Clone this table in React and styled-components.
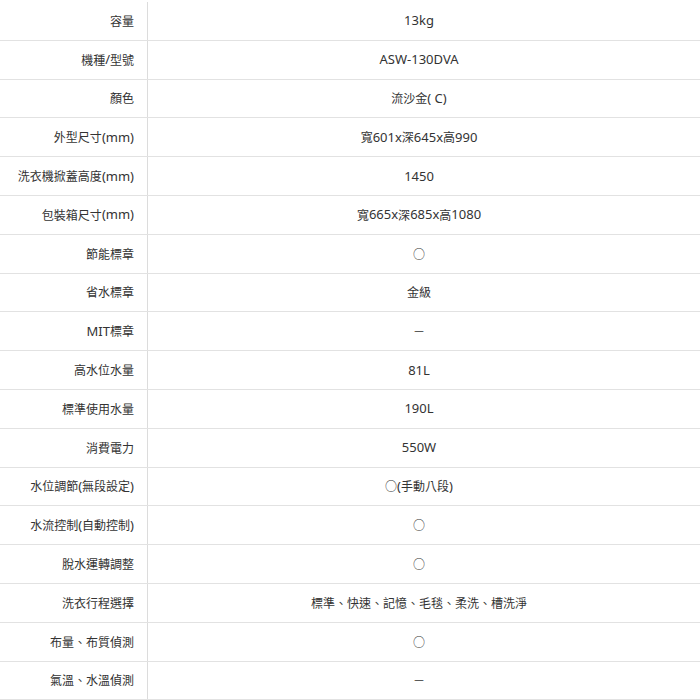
import React from "react";
import styled, { createGlobalStyle } from "styled-components";

const GlobalStyle = createGlobalStyle`
  html, body {
    margin: 0;
    padding: 0;
    background: #fff;
  }
  body {
    font-family: "Noto Sans", "Noto Sans CJK TC", sans-serif;
    color: #333;
  }
`;

const specs = [
  ["容量", "13kg"],
  ["機種/型號", "ASW-130DVA"],
  ["顏色", "流沙金( C)"],
  ["外型尺寸(mm)", "寬601x深645x高990"],
  ["洗衣機掀蓋高度(mm)", "1450"],
  ["包裝箱尺寸(mm)", "寬665x深685x高1080"],
  ["節能標章", "○"],
  ["省水標章", "金級"],
  ["MIT標章", "－"],
  ["高水位水量", "81L"],
  ["標準使用水量", "190L"],
  ["消費電力", "550W"],
  ["水位調節(無段設定)", "○(手動八段)"],
  ["水流控制(自動控制)", "○"],
  ["脫水運轉調整", "○"],
  ["洗衣行程選擇", "標準、快速、記憶、毛毯、柔洗、槽洗淨"],
  ["布量、布質偵測", "○"],
  ["氣溫、水溫偵測", "－"],
];

const Table = styled.div`
  width: 700px;
  height: 700px;
  overflow: hidden;
  padding-top: 2px;
  box-sizing: border-box;
  display: flex;
  flex-direction: column;
`;

const Row = styled.div`
  display: grid;
  grid-template-columns: 148px 1fr;
  height: 38.8px;
  flex: none;
  box-sizing: border-box;
  border-bottom: 1px solid #e2e2e2;
  font-size: 13px;
  line-height: 1;
`;

const Label = styled.div`
  display: flex;
  align-items: center;
  justify-content: flex-end;
  padding-right: 13px;
  border-right: 1px solid #dcdcdc;
  white-space: nowrap;
`;

const Value = styled.div`
  display: flex;
  align-items: center;
  justify-content: center;
  white-space: nowrap;
  padding-right: 10px;
`;

// CJK glyphs sit a touch smaller than the latin text in the original
const Cjk = styled.span`
  font-family: "Noto Sans CJK TC", sans-serif;
  font-size: 12px;
`;

const Mixed = ({ text }) =>
  text.split(/([\u3000-\u9fff\uff00-\uffef○]+)/).map((part, i) =>
    i % 2 ? <Cjk key={i}>{part}</Cjk> : part
  );

export default function App() {
  return (
    <>
      <GlobalStyle />
      <Table>
        {specs.map(([label, value]) => (
          <Row key={label}>
            <Label>
              <Mixed text={label} />
            </Label>
            <Value>
              <Mixed text={value} />
            </Value>
          </Row>
        ))}
      </Table>
    </>
  );
}
